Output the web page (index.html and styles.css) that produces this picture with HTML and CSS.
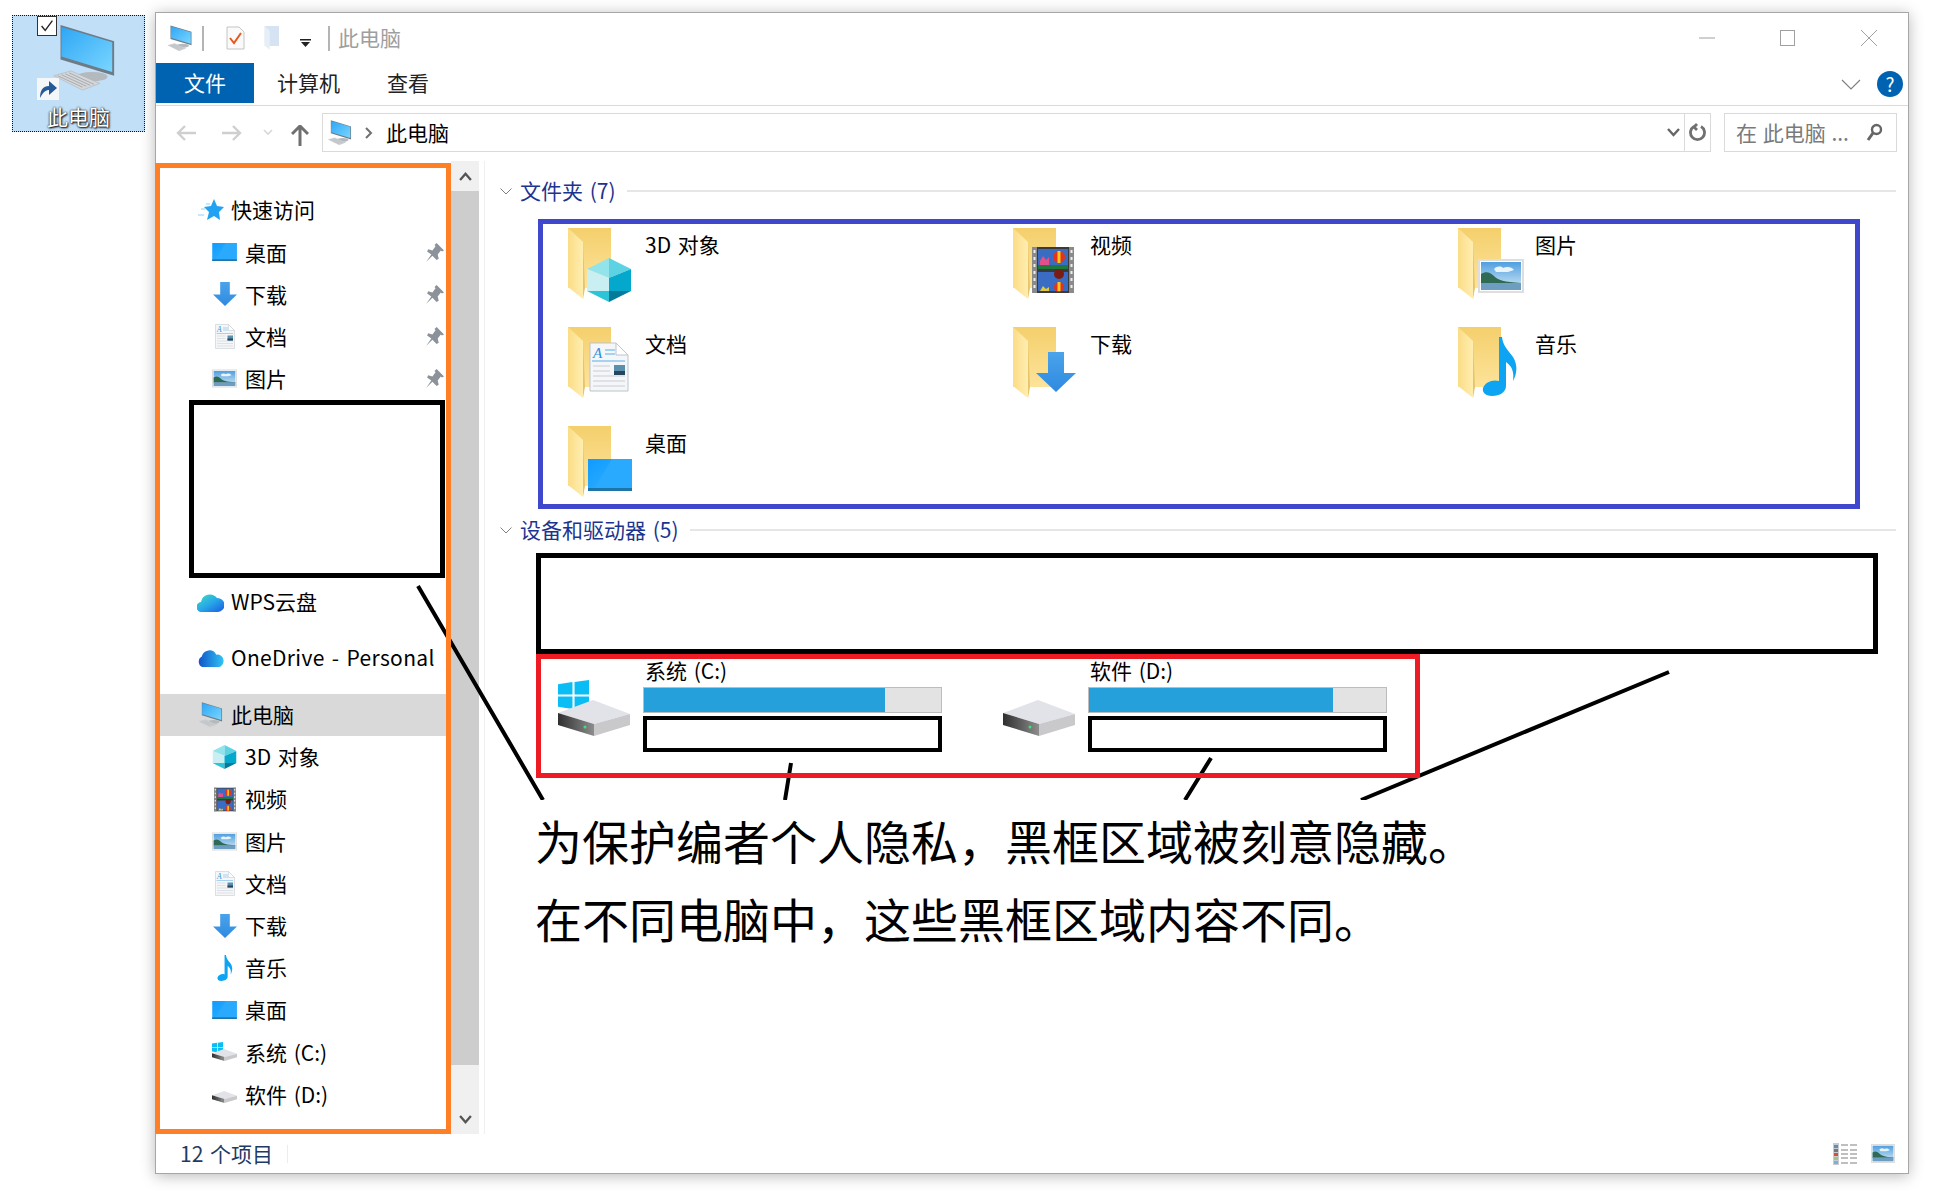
FILE: index.html
```html
<!DOCTYPE html>
<html lang="zh-CN">
<head>
<meta charset="utf-8">
<title>此电脑</title>
<link rel="stylesheet" href="styles.css">
</head>
<body>
<svg class="defs" aria-hidden="true">
  <defs>
    <linearGradient id="gFolder" x1="0" y1="0" x2="0" y2="1"><stop offset="0" stop-color="#f4cf6c"/><stop offset="1" stop-color="#fde39a"/></linearGradient>
    <linearGradient id="gFlap" x1="0" y1="0" x2="1" y2="0"><stop offset="0" stop-color="#fbdc87"/><stop offset="1" stop-color="#ffeeb0"/></linearGradient>
    <linearGradient id="gScreen" x1="0" y1="0" x2="1" y2="1"><stop offset="0" stop-color="#2ea6f5"/><stop offset="1" stop-color="#7ad6ff"/></linearGradient>
    <linearGradient id="gSky" x1="0" y1="0" x2="0" y2="1"><stop offset="0" stop-color="#4f9fe0"/><stop offset="1" stop-color="#d5e9f5"/></linearGradient>
    <linearGradient id="gArrow" x1="0" y1="0" x2="0" y2="1"><stop offset="0" stop-color="#4aa3ea"/><stop offset="1" stop-color="#2f8ae0"/></linearGradient>
    <linearGradient id="gDesk" x1="0" y1="0" x2="1" y2="1"><stop offset="0" stop-color="#0f9bff"/><stop offset="1" stop-color="#38b4ff"/></linearGradient>
    <linearGradient id="gDark" x1="0" y1="0" x2="1" y2="0"><stop offset="0" stop-color="#2f2f2f"/><stop offset="1" stop-color="#8d8d8d"/></linearGradient>
    <linearGradient id="gWps" x1="0" y1="0" x2="1" y2="1"><stop offset="0" stop-color="#3fe0c0"/><stop offset=".5" stop-color="#28a8e8"/><stop offset="1" stop-color="#1a5ae0"/></linearGradient>
    <linearGradient id="gOne" x1="0" y1="0" x2="1" y2="0"><stop offset="0" stop-color="#1255c8"/><stop offset="1" stop-color="#30c4f5"/></linearGradient>

    <symbol id="folder" viewBox="0 0 44 72" preserveAspectRatio="none">
      <rect x="0" y="0" width="43" height="60" fill="url(#gFolder)"/>
      <polygon points="0,0 15,14 15,71 0,59" fill="url(#gFlap)"/>
      <polygon points="15,14 17,60 15,71" fill="#e6c46c"/>
    </symbol>
    <symbol id="cube" viewBox="0 0 44 44">
      <polygon points="22,0 0,11 22,20" fill="#93e4ea"/>
      <polygon points="22,0 44,11 22,20" fill="#5dd2e2"/>
      <polygon points="0,11 22,20 22,33 0,33" fill="#c9eff2"/>
      <polygon points="44,11 22,20 22,33 44,33" fill="#03a8cc"/>
      <polygon points="0,33 22,33 22,44" fill="#2cc5d8"/>
      <polygon points="44,33 22,33 22,44" fill="#047a9b"/>
    </symbol>
    <symbol id="film" viewBox="0 0 42 46">
      <rect width="42" height="46" fill="#3a3a3a"/>
      <rect x="0" y="0" width="5" height="46" fill="#8a8a8a"/>
      <rect x="37" y="0" width="5" height="46" fill="#8a8a8a"/>
      <path d="M1.500 3h2v3h-2zM1.500 10h2v3h-2zM1.500 17h2v3h-2zM1.500 24h2v3h-2zM1.500 31h2v3h-2zM1.500 38h2v3h-2zM38.500 3h2v3h-2zM38.500 10h2v3h-2zM38.500 17h2v3h-2zM38.500 24h2v3h-2zM38.500 31h2v3h-2zM38.500 38h2v3h-2z" fill="#eee"/>
      <rect x="6" y="2" width="30" height="20" fill="#3a6cc4"/>
      <rect x="6" y="18" width="30" height="4" fill="#1c7a3c"/>
      <rect x="6" y="25" width="30" height="19" fill="#3a6cc4"/>
      <circle cx="27" cy="10" r="6" fill="#e4331c"/><rect x="25.500" y="4" width="3" height="12" fill="#f4c81c"/>
      <path d="M8 14l3-5 3 4 3-3v8H8z" fill="#e2508c"/>
      <circle cx="27" cy="27" r="5" fill="#7a1c14"/>
      <circle cx="27" cy="40" r="5" fill="#e4331c"/><rect x="25.500" y="35" width="3" height="9" fill="#f4c81c"/>
      <path d="M8 44l3-5 3 3 3-2v4z" fill="#e2c83c"/>
    </symbol>
    <symbol id="picture" viewBox="0 0 46 34">
      <rect width="46" height="34" fill="#dedede"/>
      <rect x="2" y="2" width="42" height="30" fill="#fff"/>
      <rect x="3" y="3" width="40" height="28" fill="url(#gSky)"/>
      <path d="M16 10c3-3 7-3 9-1 4-2 9-1 11 2l-6 2H18z" fill="#e8f3fa"/>
      <path d="M3 15c5-3 9-2 13 2s10 6 27 7v1H3z" fill="#2f6a55"/>
      <rect x="3" y="24" width="40" height="7" fill="#6d9dc0"/>
    </symbol>
    <symbol id="doc" viewBox="0 0 40 50">
      <path d="M1 1h26l12 12v36H1z" fill="#f4f6f8" stroke="#bcc4cc"/>
      <path d="M27 1v12h12z" fill="#fff" stroke="#bcc4cc"/>
      <text x="4" y="16" class="doc-a">A</text>
      <path d="M16 8h10M16 12h10M3 19h33" stroke="#56aee8" fill="none"/>
      <path d="M4 24h17M4 29h17M4 34h32M4 39h32M4 44h32" stroke="#c8ccd2" fill="none"/>
      <rect x="25" y="23" width="11" height="10" fill="#5a8fae"/>
      <rect x="25" y="29" width="11" height="4" fill="#26465a"/>
    </symbol>
    <symbol id="arrow" viewBox="0 0 40 40">
      <polygon points="12,0 28,0 28,21 40,21 20,40 0,21 12,21" fill="url(#gArrow)"/>
    </symbol>
    <symbol id="music" viewBox="0 0 40 59">
      <path d="M22 0c1 9 6 13 11 20 5 8 4 17 0 24 1-8 0-14-7-19v24c0 6-6 10-14 10C5 59 2 55 3 51c2-6 10-9 16-7V0z" fill="#0ea4f4"/>
    </symbol>
    <symbol id="desk" viewBox="0 0 44 32" preserveAspectRatio="none">
      <rect width="44" height="32" fill="url(#gDesk)"/>
      <polygon points="24,0 44,0 44,30 6,30" fill="#2aaaff"/>
      <rect y="29" width="44" height="3" fill="#1d74a8"/>
    </symbol>
    <symbol id="drive" viewBox="0 0 72 36" preserveAspectRatio="none">
      <polygon points="0,13 35,0 72,14 36,24" fill="#e2e3e8"/>
      <polygon points="0,13 36,24 36,36 0,25" fill="url(#gDark)"/>
      <polygon points="36,24 72,14 72,25 36,36" fill="#c9c9cc"/>
      <circle cx="27" cy="27" r="1.500" fill="#3ee07a"/>
    </symbol>
    <symbol id="win" viewBox="0 0 30 30">
      <polygon points="0,4 14,2 14,14 0,14" fill="#0bbdf5"/>
      <polygon points="16,2 30,0 30,14 16,14" fill="#0bbdf5"/>
      <polygon points="0,16 14,16 14,28 0,26" fill="#0bbdf5"/>
      <polygon points="16,16 30,16 30,30 16,28" fill="#0bbdf5"/>
    </symbol>
    <symbol id="pc" viewBox="0 0 70 72">
      <polygon points="11,1 67,18 67,54 11,37" fill="#6e7b86"/>
      <polygon points="12,3 65,19 65,50 12,34" fill="url(#gScreen)"/>
      <ellipse cx="44" cy="55" rx="16" ry="5" fill="#b4b9bd"/>
      <polygon points="4,54 22,49 52,62 34,69" fill="#d4d6d8" stroke="#aeb2b6" stroke-width=".6"/>
      <path d="M8 54l26 12M12 53l26 12M16 52l26 12M20 51l26 12" stroke="#9aa0a6" stroke-width=".8"/>
    </symbol>
    <symbol id="pin" viewBox="0 0 18 18">
      <path d="M11 0l7 7-2 1-1-1-3 4 1 4-2 1-4-4-6 6 5-7-4-3 1-2 4 1 3-4-1-1z" fill="#8b9299"/>
    </symbol>
    <symbol id="star" viewBox="0 0 26 22">
      <path d="M16 0l3 7 7 1-5 5 1 8-6-4-7 4 2-8-5-5 7-1z" fill="#22a2f2"/>
      <path d="M8 5h4M3 10h4M0 16h6" stroke="#8fd0f7" stroke-width="1"/>
    </symbol>
    <symbol id="cloudw" viewBox="0 0 27 20">
      <path d="M5 20a5 5 0 0 1-1-10 9 9 0 0 1 16-4 7 7 0 0 1 1 14z" fill="url(#gWps)"/>
    </symbol>
    <symbol id="cloudo" viewBox="0 0 28 19">
      <path d="M6 19a6 6 0 0 1-1-11 8 8 0 0 1 15-2 6.500 6.500 0 0 1 2 13z" fill="url(#gOne)"/>
    </symbol>
  </defs>
</svg>

<div class="desk-icon">
  <div class="desk-graphic">
    <span class="desk-check"><svg viewBox="0 0 20 20"><path d="M4 10l4 5 8-11" fill="none" stroke="#222" stroke-width="1.500"/></svg></span>
    <svg class="desk-pc" viewBox="0 0 70 72"><use href="#pc" width="70" height="72"/></svg>
    <span class="desk-shortcut"><svg viewBox="0 0 22 22"><rect width="22" height="22" fill="#f4f6f8"/><path d="M3 20c0-8 3-12 9-12V3l8 7-8 7v-5c-3 0-6 2-9 8z" fill="#245a98"/></svg></span>
  </div>
  <div class="desk-label">此电脑</div>
</div>

<main class="window">
  <header class="titlebar">
    <svg class="tb-pc" viewBox="0 0 70 72"><use href="#pc" width="70" height="72"/></svg>
    <span class="tb-sep"></span>
    <svg class="tb-check" viewBox="0 0 19 24"><path d="M1 1h12l5 5v17H1z" fill="#fafafa" stroke="#c4c4c4"/><path d="M4 12l4 5 7-10" fill="none" stroke="#e8581c" stroke-width="2"/></svg>
    <svg class="tb-folder" viewBox="0 0 44 72"><rect width="43" height="60" fill="#d6e3f2"/><polygon points="0,0 15,14 15,71 0,59" fill="#e6eef8"/></svg>
    <svg class="tb-drop" viewBox="0 0 11 8"><rect width="11" height="1.500" fill="#222"/><polygon points="1,3 10,3 5.500,8" fill="#222"/></svg>
    <span class="tb-sep tb-sep2"></span>
    <span class="tb-title">此电脑</span>
    <span class="win-btns">
      <svg class="wb" viewBox="0 0 16 16"><path d="M0 8h16" stroke="#a0a0a0"/></svg>
      <svg class="wb" viewBox="0 0 16 16"><rect x=".5" y=".5" width="14" height="15" fill="none" stroke="#a0a0a0"/></svg>
      <svg class="wb" viewBox="0 0 16 16"><path d="M0 0l16 16M16 0L0 16" stroke="#a0a0a0"/></svg>
    </span>
  </header>

  <nav class="ribbon">
    <span class="tab-file">文件</span>
    <span class="tab tab-pc">计算机</span>
    <span class="tab tab-view">查看</span>
    <svg class="rb-chev" viewBox="0 0 20 11"><path d="M1 1l9 9 9-9" fill="none" stroke="#808080" stroke-width="1.200"/></svg>
    <span class="rb-help">?</span>
  </nav>

  <div class="addr-row">
    <svg class="ar-back" viewBox="0 0 20 16"><path d="M9 1L2 8l7 7M2 8h18" fill="none" stroke="#cfcfcf" stroke-width="2.400"/></svg>
    <svg class="ar-fwd" viewBox="0 0 20 16"><path d="M11 1l7 7-7 7M18 8H0" fill="none" stroke="#cfcfcf" stroke-width="2.400"/></svg>
    <svg class="ar-down" viewBox="0 0 10 7"><path d="M1 1l4 4 4-4" fill="none" stroke="#d8d8d8" stroke-width="1.600"/></svg>
    <svg class="ar-up" viewBox="0 0 18 21"><path d="M1 9l8-8 8 8M9 1v20" fill="none" stroke="#707070" stroke-width="3"/></svg>
    <div class="addr-box">
      <svg class="ab-pc" viewBox="0 0 70 72"><use href="#pc" width="70" height="72"/></svg>
      <svg class="ab-gt" viewBox="0 0 8 12"><path d="M1 1l5 5-5 5" fill="none" stroke="#707070" stroke-width="2"/></svg>
      <span class="ab-text">此电脑</span>
      <svg class="ab-drop" viewBox="0 0 13 9"><path d="M1 1l5.500 6L12 1" fill="none" stroke="#666" stroke-width="2.400"/></svg>
      <span class="ab-refresh"><svg viewBox="0 0 17 19"><path d="M5 3.500a7 7 0 1 0 7 0M8 1L5 4l3 3" fill="none" stroke="#707070" stroke-width="2.800"/></svg></span>
    </div>
    <div class="search-box">
      <span class="sb-text">在 此电脑 ...</span>
      <svg class="sb-icon" viewBox="0 0 17 19"><circle cx="10.500" cy="6.500" r="4.500" fill="none" stroke="#666" stroke-width="2.400"/><path d="M7 10l-5 7" stroke="#666" stroke-width="3"/></svg>
    </div>
  </div>

  <div class="body-row">
    <aside class="nav">
      <div class="row top"><span class="slot"><svg class="i-star" viewBox="0 0 26 22"><use href="#star" width="26" height="22"/></svg></span>快速访问</div>
      <div class="row sub"><span class="slot"><svg class="i-desk" viewBox="0 0 44 32"><use href="#desk" width="44" height="32"/></svg></span>桌面<svg class="i-pin" viewBox="0 0 18 18"><use href="#pin" width="18" height="18"/></svg></div>
      <div class="row sub"><span class="slot"><svg class="i-arrow" viewBox="0 0 40 40"><use href="#arrow" width="40" height="40"/></svg></span>下载<svg class="i-pin" viewBox="0 0 18 18"><use href="#pin" width="18" height="18"/></svg></div>
      <div class="row sub"><span class="slot"><svg class="i-doc" viewBox="0 0 40 50"><use href="#doc" width="40" height="50"/></svg></span>文档<svg class="i-pin" viewBox="0 0 18 18"><use href="#pin" width="18" height="18"/></svg></div>
      <div class="row sub"><span class="slot"><svg class="i-pic" viewBox="0 0 46 34"><use href="#picture" width="46" height="34"/></svg></span>图片<svg class="i-pin" viewBox="0 0 18 18"><use href="#pin" width="18" height="18"/></svg></div>
      <div class="nav-hidden"></div>
      <div class="row top tall"><span class="slot"><svg class="i-cloud" viewBox="0 0 27 20"><use href="#cloudw" width="27" height="20"/></svg></span>WPS云盘</div>
      <div class="row top tall gap wide"><span class="slot"><svg class="i-cloud" viewBox="0 0 28 19"><use href="#cloudo" width="28" height="19"/></svg></span>OneDrive - Personal</div>
      <div class="row top sel"><span class="slot"><svg class="i-pcn" viewBox="0 0 70 72"><use href="#pc" width="70" height="72"/></svg></span>此电脑</div>
      <div class="row sub"><span class="slot"><svg class="i-cube" viewBox="0 0 44 44"><use href="#cube" width="44" height="44"/></svg></span>3D 对象</div>
      <div class="row sub"><span class="slot"><svg class="i-film" viewBox="0 0 42 46"><use href="#film" width="42" height="46"/></svg></span>视频</div>
      <div class="row sub"><span class="slot"><svg class="i-pic" viewBox="0 0 46 34"><use href="#picture" width="46" height="34"/></svg></span>图片</div>
      <div class="row sub"><span class="slot"><svg class="i-doc" viewBox="0 0 40 50"><use href="#doc" width="40" height="50"/></svg></span>文档</div>
      <div class="row sub"><span class="slot"><svg class="i-arrow" viewBox="0 0 40 40"><use href="#arrow" width="40" height="40"/></svg></span>下载</div>
      <div class="row sub"><span class="slot"><svg class="i-music" viewBox="0 0 40 59"><use href="#music" width="40" height="59"/></svg></span>音乐</div>
      <div class="row sub"><span class="slot"><svg class="i-desk" viewBox="0 0 44 32"><use href="#desk" width="44" height="32"/></svg></span>桌面</div>
      <div class="row sub"><span class="slot"><svg class="i-drive" viewBox="0 0 25 20"><use href="#win" x="0" y="0" width="11" height="11"/><use href="#drive" x="0" y="7" width="25" height="12"/></svg></span>系统 (C:)</div>
      <div class="row sub"><span class="slot"><svg class="i-drive" viewBox="0 0 25 20"><use href="#drive" x="0" y="7" width="25" height="12"/></svg></span>软件 (D:)</div>
    </aside>

    <div class="scroll">
      <span class="sc-btn"><svg viewBox="0 0 14 10"><path d="M1 9l6-7 6 7" fill="none" stroke="#555" stroke-width="2.600"/></svg></span>
      <span class="sc-thumb"></span>
      <span class="sc-btn sc-btn-end"><svg viewBox="0 0 14 10"><path d="M1 1l6 7 6-7" fill="none" stroke="#555" stroke-width="2.600"/></svg></span>
    </div>

    <section class="content">
      <div class="sec-head">
        <svg class="sec-chev" viewBox="0 0 12 7"><path d="M.5.5L6 6 11.500.5" fill="none" stroke="#808080"/></svg>
        <span class="sec-title">文件夹 (7)</span>
        <span class="sec-line"></span>
      </div>
      <div class="folder-box">
        <div class="tile"><svg class="f-ic" viewBox="0 0 66 74"><use href="#folder" width="44" height="72"/><use href="#cube" x="19" y="30" width="44" height="44"/></svg><span class="f-name">3D 对象</span></div>
        <div class="tile"><svg class="f-ic" viewBox="0 0 66 74"><use href="#folder" width="44" height="72"/><use href="#film" x="19" y="19" width="42" height="46"/></svg><span class="f-name">视频</span></div>
        <div class="tile"><svg class="f-ic" viewBox="0 0 66 74"><use href="#folder" width="44" height="72"/><use href="#picture" x="20" y="31" width="46" height="34"/></svg><span class="f-name">图片</span></div>
        <div class="tile"><svg class="f-ic" viewBox="0 0 66 74"><use href="#folder" width="44" height="72"/><use href="#doc" x="21" y="15" width="40" height="50"/></svg><span class="f-name">文档</span></div>
        <div class="tile"><svg class="f-ic" viewBox="0 0 66 74"><use href="#folder" width="44" height="72"/><use href="#arrow" x="23" y="25" width="40" height="40"/></svg><span class="f-name">下载</span></div>
        <div class="tile"><svg class="f-ic" viewBox="0 0 66 74"><use href="#folder" width="44" height="72"/><use href="#music" x="22" y="10" width="40" height="59"/></svg><span class="f-name">音乐</span></div>
        <div class="tile"><svg class="f-ic" viewBox="0 0 66 74"><use href="#folder" width="44" height="72"/><use href="#desk" x="20" y="33" width="44" height="32"/></svg><span class="f-name">桌面</span></div>
      </div>

      <div class="sec-head sec-head2">
        <svg class="sec-chev" viewBox="0 0 12 7"><path d="M.5.5L6 6 11.500.5" fill="none" stroke="#808080"/></svg>
        <span class="sec-title">设备和驱动器 (5)</span>
        <span class="sec-line"></span>
      </div>
      <div class="hidden-wide"></div>
      <div class="drive-box">
        <div class="drive">
          <svg class="d-ic" viewBox="0 0 72 56"><use href="#win" x="0" y="0" width="31" height="31"/><use href="#drive" x="0" y="20" width="72" height="36"/></svg>
          <div class="d-info">
            <div class="d-name">系统 (C:)</div>
            <div class="d-bar"><span class="d-fill d-fill-c"></span></div>
            <div class="d-hidden"></div>
          </div>
        </div>
        <div class="drive">
          <svg class="d-ic" viewBox="0 0 72 56"><use href="#drive" x="0" y="20" width="72" height="36"/></svg>
          <div class="d-info">
            <div class="d-name">软件 (D:)</div>
            <div class="d-bar"><span class="d-fill d-fill-d"></span></div>
            <div class="d-hidden"></div>
          </div>
        </div>
      </div>
    </section>
  </div>

  <footer class="status">
    <span class="st-count">12 个项目</span>
    <span class="st-sep"></span>
    <svg class="st-list" viewBox="0 0 24 22"><rect x="0" y="0" width="6" height="22" fill="#c8ccd0"/><path d="M1 2h4v3H1z" fill="#5a8fb8"/><path d="M1 6h4v3H1z" fill="#777"/><path d="M1 10h4v3H1z" fill="#d0503c"/><path d="M1 14h4v3H1z" fill="#a8c080"/><path d="M1 18h4v3H1z" fill="#7ab0d8"/><path d="M8 2h7M17 2h7M8 7h7M17 7h7M8 11h7M17 11h7M8 15h7M17 15h7M8 20h7M17 20h7" stroke="#aaa" stroke-width="1.500"/></svg>
    <svg class="st-pic" viewBox="0 0 46 34" preserveAspectRatio="none"><use href="#picture" width="46" height="34"/></svg>
  </footer>
</main>

<svg class="callouts" viewBox="0 0 1940 1191" aria-hidden="true">
  <path d="M418 586L543 800M791 763L785 800M1211 758L1185 800M1669 672L1361 800" fill="none" stroke="#000" stroke-width="4"/>
</svg>

<div class="note">
  <p>为保护编者个人隐私，黑框区域被刻意隐藏。</p>
  <p>在不同电脑中，这些黑框区域内容不同。</p>
</div>
</body>
</html>
```

FILE: styles.css
```css
* { box-sizing: border-box; }
html, body { margin: 0; padding: 0; }
body {
  position: relative;
  width: 1940px;
  height: 1191px;
  overflow: hidden;
  display: flex;
  align-items: flex-start;
  background: #fff;
  color: #000;
  font-family: "Noto Sans CJK SC", "Noto Sans", sans-serif;
  font-size: 21px;
  word-spacing: 2px;
  line-height: 1.2;
}
svg { display: block; flex: none; }
.defs { position: absolute; width: 0; height: 0; }
.doc-a { font: italic 15px "Liberation Serif", serif; fill: #2f8fe0; }

/* desktop icon */
.desk-icon {
  width: 133px;
  height: 117px;
  margin: 15px 0 0 12px;
  background: #c1dff7;
  outline: 1px dotted #111;
  outline-offset: -1px;
  display: flex;
  flex-direction: column;
  align-items: center;
  flex: none;
}
.desk-graphic { position: relative; width: 133px; height: 89px; flex: none; }
.desk-check { position: absolute; left: 25px; top: 1px; width: 20px; height: 20px; background: #fff; border: 1px solid #333; z-index: 1; }
.desk-pc { position: absolute; left: 38px; top: 9px; width: 67px; height: 69px; }
.desk-shortcut { position: absolute; left: 25px; top: 63px; width: 22px; height: 22px; }
.desk-label { color: #fff; text-shadow: 1px 1px 2px #000, 0 0 2px #000; font-size: 21px; line-height: 24px; }

/* window */
.window {
  width: 1754px;
  height: 1162px;
  margin: 12px 0 0 10px;
  border: 1px solid #a6a6a6;
  background: #fff;
  box-shadow: 0 2px 14px rgba(0, 0, 0, .28);
  display: flex;
  flex-direction: column;
  flex: none;
}
.titlebar { height: 50px; display: flex; align-items: center; flex: none; padding-left: 10px; }
.tb-pc { width: 27px; height: 27px; }
.tb-sep { width: 2px; height: 25px; background: #b4b4b4; margin-left: 9px; }
.tb-check { width: 19px; height: 24px; margin-left: 22px; }
.tb-folder { width: 16px; height: 24px; margin-left: 19px; }
.tb-drop { width: 11px; height: 8px; margin: 10px 0 0 20px; }
.tb-sep2 { margin-left: 17px; }
.tb-title { color: #9e9e9e; margin-left: 8px; }
.win-btns { margin-left: auto; display: flex; gap: 65px; padding-right: 31px; }
.wb { width: 16px; height: 16px; }

.ribbon { height: 43px; border-bottom: 1px solid #dadada; display: flex; align-items: flex-start; flex: none; }
.tab-file { width: 98px; height: 40px; background: #0063b1; color: #fff; display: flex; align-items: center; justify-content: center; }
.tab { height: 40px; display: flex; align-items: center; color: #222; }
.tab-pc { margin-left: 23px; }
.tab-view { margin-left: 47px; }
.rb-chev { width: 20px; height: 11px; margin: 16px 0 0 auto; }
.rb-help { width: 26px; height: 26px; margin: 8px 5px 0 16px; border-radius: 50%; background: #0063b1; color: #fff; font-size: 19px; display: flex; align-items: center; justify-content: center; }

.addr-row { height: 55px; display: flex; align-items: flex-start; flex: none; }
.ar-back { width: 20px; height: 16px; margin: 19px 0 0 20px; }
.ar-fwd { width: 20px; height: 16px; margin: 19px 0 0 26px; }
.ar-down { width: 10px; height: 7px; margin: 23px 0 0 21px; }
.ar-up { width: 18px; height: 21px; margin: 19px 0 0 18px; }
.addr-box { width: 1389px; height: 39px; margin: 7px 0 0 13px; border: 1px solid #dadada; display: flex; align-items: center; }
.ab-pc { width: 27px; height: 26px; margin-left: 3px; }
.ab-gt { width: 8px; height: 12px; margin-left: 12px; }
.ab-text { margin-left: 13px; }
.ab-drop { width: 13px; height: 9px; margin-left: auto; }
.ab-refresh { width: 26px; height: 37px; margin-left: 4px; border-left: 1px solid #dadada; display: flex; align-items: center; justify-content: center; }
.ab-refresh svg { width: 17px; height: 19px; }
.search-box { width: 173px; height: 39px; margin: 7px 0 0 13px; border: 1px solid #dadada; display: flex; align-items: center; padding: 0 13px 0 11px; }
.sb-text { color: #7a7a7a; white-space: nowrap; word-spacing: 1px; }
.sb-icon { width: 17px; height: 19px; margin-left: auto; }

/* body */
.body-row { flex: 1; display: flex; min-height: 0; }
.nav {
  position: relative;
  z-index: 2;
  width: 296px;
  height: 971px;
  margin: 2px 0 0 -1px;
  border: 5px solid #ff7f27;
  padding-top: 21px;
  flex: none;
}
.row { display: flex; align-items: center; height: 42px; white-space: nowrap; }
.row.top { padding-left: 37px; }
.row.sub { padding-left: 52px; height: 42.2px; }
.row.top .slot { width: 27px; margin-right: 7px; }
.row.sub .slot { width: 25px; margin-right: 8px; }
.slot { display: flex; justify-content: center; align-items: center; flex: none; }
.row.tall { height: 46px; margin-top: 1px; }
.row.gap { margin-top: 10px; }
.row.wide { letter-spacing: .35px; }
.row.sel { background: #d9d9d9; margin-top: 13px; }
.nav-hidden { width: 256px; height: 178px; margin: 0 0 0 29px; border: 5px solid #000; }
.i-star { width: 26px; height: 22px; }
.i-desk { width: 25px; height: 18px; }
.i-arrow { width: 24px; height: 24px; }
.i-doc { width: 20px; height: 25px; }
.i-pic { width: 25px; height: 19px; }
.i-pin { width: 19px; height: 19px; margin-left: auto; margin-right: 2px; }
.i-cloud { width: 27px; height: 20px; }
.i-pcn { width: 27px; height: 26px; }
.i-cube { width: 25px; height: 24px; }
.i-film { width: 22px; height: 25px; }
.i-music { width: 18px; height: 26px; }
.i-drive { width: 25px; height: 20px; }

.scroll { width: 28px; background: #f0f0f0; display: flex; flex-direction: column; flex: none; }
.sc-btn { height: 30px; display: flex; align-items: center; justify-content: center; flex: none; }
.sc-btn svg { width: 13px; height: 9px; }
.sc-thumb { height: 874px; background: #cdcdcd; flex: none; }
.sc-btn-end { height: 69px; align-items: flex-end; padding-bottom: 10px; }

.content { flex: 1; border-left: 1px solid #f0f0f0; margin-left: 5px; padding-top: 15px; min-width: 0; }
.sec-head { height: 30px; display: flex; align-items: center; padding: 0 12px 0 15px; }
.sec-head2 { margin-top: 6px; }
.sec-chev { width: 12px; height: 7px; }
.sec-title { color: #1c3490; margin-left: 8px; white-space: nowrap; }
.sec-line { flex: 1; height: 2px; background: #e6e6e6; margin-left: 11px; }

.folder-box {
  width: 1322px;
  height: 290px;
  margin: 13px 0 0 53px;
  border: 5px solid #3f48cc;
  padding: 4px 0 0 25px;
  display: grid;
  grid-template-columns: repeat(3, 445px);
  grid-auto-rows: 99px;
}
.tile { display: flex; align-items: flex-start; }
.f-ic { width: 66px; height: 74px; }
.f-name { line-height: 26px; margin: 3px 0 0 11px; }

.hidden-wide { width: 1342px; height: 101px; margin: 8px 0 0 51px; border: 5px solid #000; }
.drive-box {
  position: relative;
  z-index: 2;
  width: 884px;
  height: 124px;
  margin-left: 51px;
  border: 5px solid #ed1c24;
  padding-left: 17px;
  display: grid;
  grid-template-columns: repeat(2, 445px);
}
.drive { display: flex; align-items: flex-start; }
.d-ic { width: 72px; height: 56px; margin: 21px 13px 0 0; }
.d-info { width: 299px; display: flex; flex-direction: column; }
.d-name { height: 24px; line-height: 22px; padding-left: 2px; white-space: nowrap; }
.d-bar { height: 26px; margin-top: 4px; background: #e3e3e3; border: 1px solid #bcbcbc; display: flex; }
.d-fill { display: block; height: 100%; background: #26a0da; }
.d-fill-c { width: 81%; }
.d-fill-d { width: 82%; }
.d-hidden { height: 36px; margin-top: 3px; border: 4px solid #000; }

.status { height: 39px; flex: none; display: flex; align-items: center; padding-left: 24px; }
.st-count { color: #1e3a66; }
.st-sep { width: 1px; height: 18px; background: #ececec; margin-left: 14px; }
.st-list { width: 24px; height: 22px; margin-left: auto; }
.st-pic { width: 24px; height: 19px; margin: 0 13px 0 14px; }

/* annotations */
.callouts { position: absolute; left: 0; top: 0; width: 1940px; height: 1191px; z-index: 1; pointer-events: none; }
.note { position: absolute; left: 530px; top: 800px; width: 1000px; padding: 1px 0 0 5px; background: #fff; z-index: 3; font-size: 47px; line-height: 78px; color: #000; }
.note p { margin: 0; white-space: nowrap; }
```
